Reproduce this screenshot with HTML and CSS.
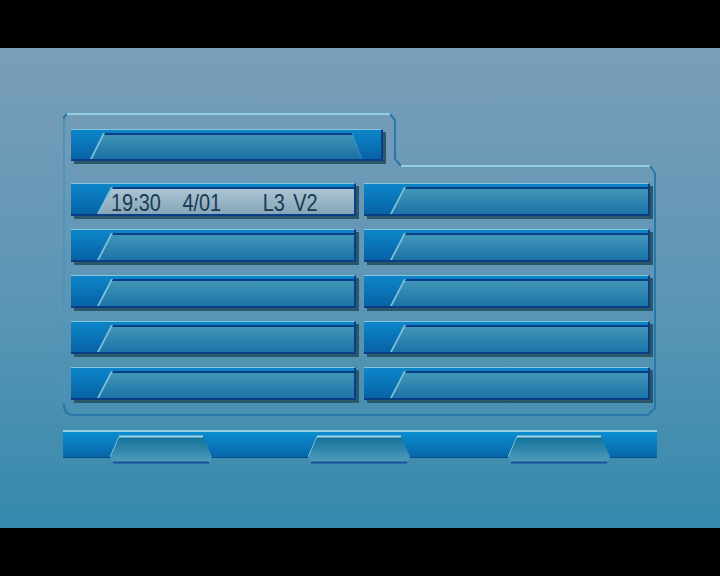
FILE: index.html
```html
<!DOCTYPE html>
<html lang="en">
<head>
    <meta charset="UTF-8">
    <title>Timer Menu</title>
    <link rel="stylesheet" href="styles.css">
</head>
<body>
    <div class="screen">
        <div class="panel">
            <!-- frame outline with the step on the right -->
            <svg class="frame" width="596" height="305" viewBox="0 0 596 305">
                <path d="M1,4 L1,292 Q1,302 11,302 L585,302 L592,295 L592,60 L587,53 L338,53 L332,46 L332,7 L327,1 L4,1 Z"
                      fill="none" stroke="#2a77ab" stroke-width="2"/>
                <path d="M4,1 L327,1" stroke="#93cfe3" stroke-width="2"/>
                <path d="M338,53 L587,53" stroke="#93cfe3" stroke-width="2"/>
                <path d="M1,6 L1,290" stroke="#6fb3d0" stroke-width="1"/>
            </svg>

            <div class="title-bar">
                <div class="slot slot-both"><div class="fill"></div></div>
            </div>

            <div class="grid">
                <div class="row">
                    <div class="slot"><div class="fill selected">
                        <div class="readout">
                            <span class="t-time">19:30</span>
                            <span class="t-date">4/01</span>
                            <span class="t-l">L3</span>
                            <span class="t-v">V2</span>
                        </div>
                    </div></div>
                </div>
                <div class="row"><div class="slot"><div class="fill"></div></div></div>
                <div class="row"><div class="slot"><div class="fill"></div></div></div>
                <div class="row"><div class="slot"><div class="fill"></div></div></div>
                <div class="row"><div class="slot"><div class="fill"></div></div></div>
                <div class="row"><div class="slot"><div class="fill"></div></div></div>
                <div class="row"><div class="slot"><div class="fill"></div></div></div>
                <div class="row"><div class="slot"><div class="fill"></div></div></div>
                <div class="row"><div class="slot"><div class="fill"></div></div></div>
                <div class="row"><div class="slot"><div class="fill"></div></div></div>
            </div>
        </div>

        <div class="bottom-bar">
            <svg width="0" height="0" class="defs">
                <defs>
                    <linearGradient id="tabFill" x1="0" y1="0" x2="0" y2="1">
                        <stop offset="0" stop-color="#0f6f97"/>
                        <stop offset="1" stop-color="#4f9dbd"/>
                    </linearGradient>
                </defs>
            </svg>
            <svg class="tab tab-1" width="102" height="29" viewBox="0 0 102 29">
                <polygon points="9,1 93,1 102,22 99,27 3,27 0,22" fill="url(#tabFill)"/>
                <path d="M0,22 L9,1.5" stroke="#7cc0da" stroke-width="1" fill="none"/>
                <path d="M9,1.5 L93,1.5" stroke="#9fd4e6" stroke-width="2"/>
                <path d="M3,27.5 L99,27.5" stroke="#17509a" stroke-width="2"/>
            </svg>
            <svg class="tab tab-2" width="102" height="29" viewBox="0 0 102 29">
                <polygon points="9,1 93,1 102,22 99,27 3,27 0,22" fill="url(#tabFill)"/>
                <path d="M0,22 L9,1.5" stroke="#7cc0da" stroke-width="1" fill="none"/>
                <path d="M9,1.5 L93,1.5" stroke="#9fd4e6" stroke-width="2"/>
                <path d="M3,27.5 L99,27.5" stroke="#17509a" stroke-width="2"/>
            </svg>
            <svg class="tab tab-3" width="102" height="29" viewBox="0 0 102 29">
                <polygon points="9,1 93,1 102,22 99,27 3,27 0,22" fill="url(#tabFill)"/>
                <path d="M0,22 L9,1.5" stroke="#7cc0da" stroke-width="1" fill="none"/>
                <path d="M9,1.5 L93,1.5" stroke="#9fd4e6" stroke-width="2"/>
                <path d="M3,27.5 L99,27.5" stroke="#17509a" stroke-width="2"/>
            </svg>
        </div>
    </div>
</body>
</html>
```

FILE: styles.css
```css
html, body {
    margin: 0;
    background-color: #000;
}

body {
    height: 576px;
    overflow: hidden;
}

.screen {
    margin-top: 48px;
    height: 480px;
    box-sizing: border-box;
    padding: 65px 0 0 63px;
    background: linear-gradient(#7a9eb8, #5a95b5 55%, #3489ad);
}

.panel {
    position: relative;
    width: 594px;
    height: 303px;
    box-sizing: border-box;
    padding: 16px 0 0 8px;
}

.frame {
    position: absolute;
    top: 0;
    left: 0;
}

/* shared bar look */
.title-bar, .row {
    position: relative;
    box-sizing: border-box;
    height: 33px;
    border-top: 1px solid #86c6de;
    border-right: 2px solid #0b3d84;
    border-bottom: 2px solid #0b3d84;
    background: linear-gradient(#0c86c9, #0862a6);
    box-shadow: 3px 3px 0 #2b5869;
}

.title-bar {
    width: 312px;
    height: 32px;
    padding: 3px 0 0 19px;
}

.row {
    padding: 3px 0 0 26px;
}

.slot {
    height: 27px;
    background-color: #7cc0da;
    clip-path: polygon(14px 0, 100% 0, 100% 100%, 0 100%);
}

.slot-both {
    width: 272px;
    height: 26px;
    clip-path: polygon(13px 0, calc(100% - 10px) 0, 100% 100%, 0 100%);
}

.fill {
    box-sizing: border-box;
    height: 100%;
    margin-left: 2px;
    border-top: 2px solid #0b3d84;
    background: linear-gradient(#4196b8, #1b73a7);
    clip-path: polygon(14px 0, 100% 0, 100% 100%, 0 100%);
}

.slot-both .fill {
    clip-path: polygon(13px 0, calc(100% - 10px) 0, 100% 100%, 0 100%);
    background: linear-gradient(#3f94b7, #1a70a4);
}

.fill.selected {
    display: flex;
    align-items: center;
    padding: 2px 0 0 12px;
    background: linear-gradient(#aac4d3, #86a5b9);
    color: #1b3a51;
    font-family: "Liberation Sans", Arial, sans-serif;
    font-size: 24px;
    line-height: 24px;
}

.readout {
    display: flex;
    white-space: nowrap;
    transform: scaleX(0.83);
    transform-origin: left center;
}

.t-date {
    margin-left: 26px;
}

.t-l {
    margin-left: 50px;
}

.t-v {
    margin-left: 10px;
}

.grid {
    margin-top: 22px;
    display: grid;
    grid-template-columns: 285px 286px;
    grid-auto-rows: 33px;
    column-gap: 8px;
    row-gap: 13px;
}

.bottom-bar {
    margin-top: 14px;
    width: 594px;
    height: 28px;
    box-sizing: border-box;
    display: flex;
    align-items: flex-start;
    border-top: 2px solid #94cde2;
    border-bottom: 1px solid #0b4a8c;
    background: linear-gradient(#0a8dcf, #0866aa);
}

.defs {
    display: block;
}

.tab {
    flex: none;
    margin-top: 3px;
}

.tab-1 {
    margin-left: 47px;
}

.tab-2 {
    margin-left: 96px;
}

.tab-3 {
    margin-left: 98px;
}
```
